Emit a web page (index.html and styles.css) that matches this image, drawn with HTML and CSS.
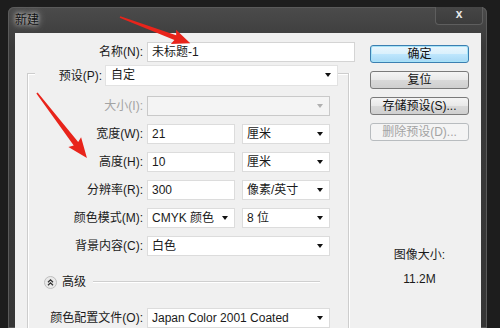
FILE: index.html
```html
<!DOCTYPE html>
<html lang="zh-CN">
<head>
    <meta charset="UTF-8">
    <meta name="viewport" content="width=device-width, initial-scale=1.0">
    <title>新建</title>
    <link rel="stylesheet" href="styles.css">
</head>
<body>
    <div class="window">
        <div class="titlebar">
            <span class="title">新建</span>
            <div class="close">x</div>
        </div>
        <div class="client">
            <div class="form">
                <div class="row name-row">
                    <label class="lbl name-lbl">名称(N):</label>
                    <div class="field input name-input">未标题-1</div>
                </div>

                <div class="group">
                    <div class="legend">
                        <label class="lbl preset-lbl">预设(P):</label>
                        <div class="field select preset">自定</div>
                    </div>

                    <div class="row first">
                        <label class="lbl off">大小(I):</label>
                        <div class="field select full disabled"></div>
                    </div>
                    <div class="row">
                        <label class="lbl">宽度(W):</label>
                        <div class="field input half">21</div>
                        <div class="field select half">厘米</div>
                    </div>
                    <div class="row">
                        <label class="lbl">高度(H):</label>
                        <div class="field input half">10</div>
                        <div class="field select half">厘米</div>
                    </div>
                    <div class="row">
                        <label class="lbl">分辨率(R):</label>
                        <div class="field input half">300</div>
                        <div class="field select half">像素/英寸</div>
                    </div>
                    <div class="row">
                        <label class="lbl">颜色模式(M):</label>
                        <div class="field select half">CMYK 颜色</div>
                        <div class="field select half">8 位</div>
                    </div>
                    <div class="row">
                        <label class="lbl">背景内容(C):</label>
                        <div class="field select full">白色</div>
                    </div>

                    <div class="advanced">
                        <svg class="chev" width="13" height="13" viewBox="0 0 13 13">
                            <circle cx="6.5" cy="6.5" r="6" fill="#e9e9e9" stroke="#bdbdbd"/>
                            <path d="M4 6.2 L6.5 3.8 L9 6.2 M4 9.2 L6.5 6.8 L9 9.2" fill="none" stroke="#333" stroke-width="1.3"/>
                        </svg>
                        <span>高级</span>
                        <div class="rule"></div>
                    </div>

                    <div class="row profile">
                        <label class="lbl">颜色配置文件(O):</label>
                        <div class="field select full">Japan Color 2001 Coated</div>
                    </div>
                </div>
            </div>

            <div class="side">
                <div class="btn default">确定</div>
                <div class="btn">复位</div>
                <div class="btn">存储预设(S)...</div>
                <div class="btn disabled">删除预设(D)...</div>
                <div class="size-info">
                    <div>图像大小:</div>
                    <div>11.2M</div>
                </div>
            </div>
        </div>
    </div>

    <!-- red arrows drawn over the screenshot -->
    <svg class="marks" width="500" height="328" viewBox="0 0 500 328">
        <polygon points="0,-0.8 59,-2.6 57,-7.5 75,0 57,7.5 59,2.6 0,0.8" fill="#e8241b" transform="translate(120 17) rotate(20.4)"/>
        <polygon points="0,-0.8 64,-2.8 62,-8 82,0 62,8 64,2.8 0,0.8" fill="#e8241b" transform="translate(37 93) rotate(52.5)"/>
    </svg>
</body>
</html>
```

FILE: styles.css
```css
body {
    margin: 0;
    height: 328px;
    overflow: hidden;
    position: relative;
    background: #1d1d1d;
    font-family: "Liberation Sans", "Noto Sans CJK SC", sans-serif;
    font-size: 12px;
    color: #1a1a1a;
}

.window {
    margin: 7px 0 0 8px;
    width: 479px;
    padding: 0 6px 0 7px;
    box-sizing: border-box;
    background: linear-gradient(#4b4b4b, #3a3a3a 40px, #363636);
    border-radius: 6px 6px 0 0;
    box-shadow: inset 0 0 0 1px #5a5a5a;
}

.titlebar {
    height: 26px;
    display: flex;
    align-items: flex-start;
    justify-content: space-between;
}

.title {
    margin-top: 6px;
    color: #111;
    text-shadow: 0 0 4px rgba(235, 235, 235, 0.9), 0 0 8px rgba(235, 235, 235, 0.7);
    line-height: 14px;
}

.close {
    width: 46px;
    height: 17px;
    margin-right: -2px;
    border: 1px solid #5e5e5e;
    border-top: none;
    border-radius: 0 0 4px 4px;
    background: linear-gradient(#464646, #3c3c3c);
    color: #e8e8e8;
    font-weight: bold;
    font-size: 12px;
    line-height: 15px;
    text-align: center;
}

.client {
    background: #f0f0f0;
    height: 295px;
    overflow: hidden;
    display: flex;
    gap: 15px;
}

.form {
    width: 328px;
    padding: 9px 0 0 12px;
}

.row {
    display: flex;
    align-items: center;
    gap: 4px;
    height: 20px;
    margin-top: 8px;
}

.name-row {
    margin-top: 0;
}

.lbl {
    width: 115px;
    flex: none;
    text-align: right;
    line-height: 16px;
    white-space: nowrap;
}

.name-lbl {
    width: 116px;
}

.lbl.off {
    color: #a3a3a3;
}

.field {
    height: 20px;
    box-sizing: border-box;
    background: #fff;
    border: 1px solid #dcdcdc;
    line-height: 18px;
    padding-left: 4px;
    white-space: nowrap;
    flex: none;
    position: relative;
}

.name-input {
    width: 208px;
    border-color: #d4d4d4;
}

.full {
    width: 183px;
}

.half {
    width: 88px;
}

.half + .half {
    margin-left: 3px;
}

.select::after {
    content: "";
    position: absolute;
    right: 6px;
    top: 7px;
    border-left: 3.5px solid transparent;
    border-right: 3.5px solid transparent;
    border-top: 4px solid #111;
}

.select.disabled {
    background: #f4f4f4;
    border-color: #c9c9c9;
}

.select.disabled::after {
    border-top-color: #b0b0b0;
}

.group {
    margin-top: 11px;
    width: 322px;
    box-sizing: border-box;
    border: 1px solid #cdcdcd;
    border-bottom: none;
    box-shadow: inset 1px 1px 0 #fff, 1px 0 0 #fff;
}

.legend {
    display: flex;
    align-items: center;
    gap: 3px;
    margin: -9px 10px 0 7px;
    height: 21px;
    background: #f0f0f0;
}

.preset-lbl {
    width: 67px;
}

.preset {
    width: 233px;
    height: 21px;
    padding-left: 5px;
    border-color: #e2e2e2;
}

.row.first {
    margin-top: 10px;
}

.advanced {
    display: flex;
    align-items: center;
    gap: 5px;
    height: 14px;
    margin: 19px 28px 0 16px;
    line-height: 14px;
}

.rule {
    flex: 1;
    margin-left: 2px;
    border-top: 1px solid #cfcfcf;
    border-bottom: 1px solid #fff;
}

.row.profile {
    margin-top: 19px;
}

.side {
    width: 99px;
    padding-top: 12px;
    display: flex;
    flex-direction: column;
    gap: 8px;
}

.btn {
    height: 18px;
    box-sizing: border-box;
    border: 1px solid #7a7a7a;
    border-radius: 3px;
    background: linear-gradient(#f4f4f4, #e8e8e8 50%, #d9d9d9 51%, #cfcfcf);
    text-align: center;
    line-height: 16px;
    color: #111;
}

.btn.default {
    border-color: #3c7fb1;
    box-shadow: inset 0 0 0 1px #a7e3f7;
    background: linear-gradient(#eaf6fd, #d9f0fc 50%, #bee6fd 51%, #a7d9f5);
}

.btn.disabled {
    border-color: #b8bcbf;
    background: #f4f4f4;
    color: #a3a3a3;
}

.size-info {
    margin-top: 98px;
    text-align: center;
    line-height: 16px;
    display: flex;
    flex-direction: column;
    gap: 8px;
}

.marks {
    position: absolute;
    left: 0;
    top: 0;
    pointer-events: none;
}
```
